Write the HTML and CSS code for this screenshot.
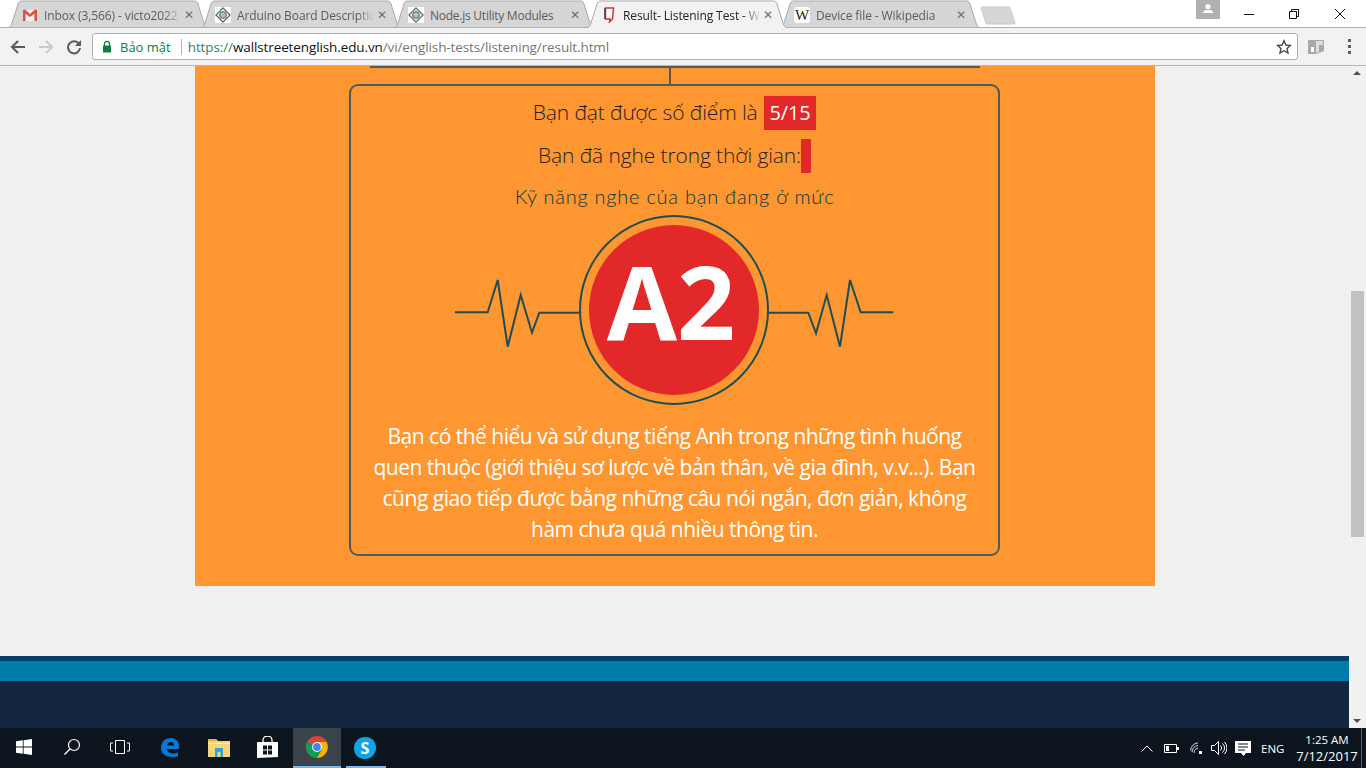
FILE: index.html
```html
<!DOCTYPE html>
<html lang="vi">
<head>
<meta charset="utf-8">
<title>Result- Listening Test</title>
<link rel="stylesheet" href="styles.css">
</head>
<body>
<header class="chrome">
  <div class="tabstrip">
    <div class="tab">
      <svg class="tab-shape" viewBox="0 0 206 28"><path d="M0 28 C5 28 6 26 7 23 L13 4 C14 1 15 1 18 1 L188 1 C191 1 192 1 193 4 L199 23 C200 26 201 28 206 28" /></svg>
      <svg class="fav" viewBox="0 0 16 16"><path d="M1 3h14v11H1z" fill="#f1f1f1"/><path d="M1 14V3l2-.5L8 7l5-4.500 2 .5v11h-2.500V6.500L8 10 3.500 6.500V14z" fill="#dd5044"/></svg>
      <span class="tab-title">Inbox (3,566) - victo2022</span>
      <span class="tab-x">✕</span>
    </div>
    <div class="tab">
      <svg class="tab-shape" viewBox="0 0 206 28"><path d="M0 28 C5 28 6 26 7 23 L13 4 C14 1 15 1 18 1 L188 1 C191 1 192 1 193 4 L199 23 C200 26 201 28 206 28" /></svg>
      <svg class="fav" viewBox="0 0 16 16"><path d="M0 0h16v16H0z" fill="#fff"/><path d="M8 1l7 7-7 7-7-7z" fill="none" stroke="#5f6f66" stroke-width="1.300"/><circle cx="8" cy="8" r="3.400" fill="#a9c4b2" stroke="#4f6a5c"/></svg>
      <span class="tab-title">Arduino Board Descriptic</span>
      <span class="tab-x">✕</span>
    </div>
    <div class="tab">
      <svg class="tab-shape" viewBox="0 0 206 28"><path d="M0 28 C5 28 6 26 7 23 L13 4 C14 1 15 1 18 1 L188 1 C191 1 192 1 193 4 L199 23 C200 26 201 28 206 28" /></svg>
      <svg class="fav" viewBox="0 0 16 16"><path d="M0 0h16v16H0z" fill="#fff"/><path d="M8 1l7 7-7 7-7-7z" fill="none" stroke="#5f6f66" stroke-width="1.300"/><circle cx="8" cy="8" r="3.400" fill="#a9c4b2" stroke="#4f6a5c"/></svg>
      <span class="tab-title tab-title-node">Node.js Utility Modules</span>
      <span class="tab-x">✕</span>
    </div>
    <div class="tab tab-active">
      <svg class="tab-shape" viewBox="0 0 206 28"><path d="M0 28 C5 28 6 26 7 23 L13 4 C14 1 15 1 18 1 L188 1 C191 1 192 1 193 4 L199 23 C200 26 201 28 206 28" /></svg>
      <svg class="fav" viewBox="0 0 16 16"><path d="M4.500 1h8l-1 11-3 3 .5-3h-4.500z" fill="#fff" stroke="#d6332f" stroke-width="1.500"/><path d="M4 1v11" stroke="#33495c" stroke-width="1.600"/></svg>
      <span class="tab-title tab-title-dark">Result- Listening Test - W</span>
      <span class="tab-x">✕</span>
    </div>
    <div class="tab">
      <svg class="tab-shape" viewBox="0 0 206 28"><path d="M0 28 C5 28 6 26 7 23 L13 4 C14 1 15 1 18 1 L188 1 C191 1 192 1 193 4 L199 23 C200 26 201 28 206 28" /></svg>
      <span class="fav fav-w">W</span>
      <span class="tab-title">Device file - Wikipedia</span>
      <span class="tab-x">✕</span>
    </div>
    <svg class="newtab" viewBox="0 0 36 20"><path d="M1 2 C1 1 2 1 3 1 L28 1 C29 1 30 1 30 2 L35 17 C35 18 34 18 33 18 L8 18 C7 18 6 18 6 17z" fill="#d6d6d6" stroke="#c8c8c8"/></svg>
    <div class="window-controls">
      <div class="profile"><svg viewBox="0 0 24 19" width="24" height="19"><circle cx="12" cy="6.500" r="2.600" fill="#fff"/><path d="M7 13c0-2.500 2-3 5-3s5 .5 5 3z" fill="#fff"/></svg></div>
      <svg class="wc-min" viewBox="0 0 12 12" width="12" height="12"><path d="M1 6.500h10" stroke="#111" fill="none"/></svg>
      <svg class="wc-max" viewBox="0 0 12 12" width="12" height="12"><path d="M1.500 3.500h7v7h-7zM3.500 3.500v-2h7v7h-2" stroke="#111" fill="none"/></svg>
      <svg class="wc-close" viewBox="0 0 12 12" width="12" height="12"><path d="M1 1l10 10M11 1L1 11" stroke="#111" fill="none"/></svg>
    </div>
  </div>
  <div class="toolbar">
    <svg class="nav" viewBox="0 0 16 16" width="16" height="16"><path d="M15 8H2M8 2L2 8l6 6" fill="none" stroke="#5a5a5a" stroke-width="2"/></svg>
    <svg class="nav" viewBox="0 0 16 16" width="16" height="16"><path d="M1 8h13M8 2l6 6-6 6" fill="none" stroke="#c9c9c9" stroke-width="2"/></svg>
    <svg class="nav nav-last" viewBox="0 0 16 16" width="16" height="16"><path d="M13 5a6 6 0 1 0 1 4" fill="none" stroke="#5a5a5a" stroke-width="2"/><path d="M15 1v6H9z" fill="#5a5a5a"/></svg>
    <div class="omnibox">
      <svg class="lock" viewBox="0 0 10 13" width="10" height="13"><path d="M2.500 6V3.800a2.500 2.500 0 0 1 5 0V6" fill="none" stroke="#0b8043" stroke-width="1.300"/><path d="M1 5.500h8v7H1z" fill="#0b8043"/></svg>
      <span class="secure">Bảo mật</span>
      <span class="omni-sep"></span>
      <span class="url"><span class="url-scheme">https://</span><span class="url-host">wallstreetenglish.edu.vn</span>/vi/english-tests/listening/result.html</span>
      <svg class="star" viewBox="0 0 16 16" width="16" height="16"><path d="M8 1.800l1.900 4.200 4.500.5-3.400 3 1 4.500L8 11.700 4 14l1-4.500-3.400-3 4.500-.5z" fill="none" stroke="#4a4a4a" stroke-width="1.400"/></svg>
    </div>
    <svg class="ext" viewBox="0 0 16 16" width="16" height="16"><path d="M0 1h16v11l-8 3H0z" fill="#a8a8a8"/><path d="M8 2h7v4H11v7l-3 1z" fill="#dcdcdc"/><path d="M3 8l3 0v5H3z" fill="#fff"/></svg>
    <div class="dots"><i></i><i></i><i></i></div>
  </div>
</header>

<main class="viewport">
  <div class="page">
    <section class="panel">
      <div class="tree-bar"></div>
      <div class="tree-stem"></div>
      <div class="result">
        <p class="score">Bạn đạt được số điểm là <span class="chip">5/15</span></p>
        <p class="score score-time">Bạn đã nghe trong thời gian:<span class="chip chip-empty"></span></p>
        <p class="level">Kỹ năng nghe của bạn đang ở mức</p>
        <div class="badge">
          <svg class="pulse" viewBox="0 0 439 70" width="439" height="70">
            <path d="M0 33.300H32.700L42.700 1 52.700 67.700 65.700 16 77 53.700 84.300 33.700H124.300M313.300 33.700H353.300L361 54.300 371.700 16 385 67.700 395 1 405.700 33.300H438.300" />
          </svg>
          <div class="ring"><div class="disc">A2</div></div>
        </div>
        <p class="desc">Bạn có thể hiểu và sử dụng tiếng Anh trong những tình huống<br>quen thuộc (giới thiệu sơ lược về bản thân, về gia đình, v.v...). Bạn<br>cũng giao tiếp được bằng những câu nói ngắn, đơn giản, không<br>hàm chưa quá nhiều thông tin.</p>
      </div>
    </section>
    <footer class="site-footer">
      <div class="foot-line"></div>
      <div class="foot-teal"></div>
      <div class="foot-navy"></div>
    </footer>
  </div>
  <aside class="scrollbar">
    <span class="arrow arrow-up"></span>
    <span class="thumb"></span>
    <span class="arrow arrow-down"></span>
  </aside>
</main>

<footer class="taskbar">
  <div class="task-item">
    <svg viewBox="0 0 16 16" width="16" height="16"><path d="M0 2.300L6.800 1.300V7.600H0zM7.600 1.200L16 0V7.600H7.600zM0 8.400H6.800V14.700L0 13.700zM7.600 8.400H16V16L7.600 14.800z" fill="#fff"/></svg>
  </div>
  <div class="task-item">
    <svg viewBox="0 0 18 18" width="18" height="18"><circle cx="11" cy="7" r="5.500" fill="none" stroke="#fff" stroke-width="1.200"/><path d="M7 11L1.500 16.500" stroke="#fff" stroke-width="1.500"/></svg>
  </div>
  <div class="task-item">
    <svg viewBox="0 0 20 14" width="20" height="14"><path d="M5.500 .5h9v13h-9z" fill="none" stroke="#fff"/><path d="M3 3H.5v8H3M17 3h2.500v8H17" fill="none" stroke="#fff"/></svg>
  </div>
  <div class="task-item task-gap">
    <svg viewBox="0 0 20 20" width="20" height="20"><path d="M1 11C1 5 5 1 11 1c5 0 8 3.500 8 9v2H7c.3 3 3 4.500 6 4.500 2 0 4-.5 5-1.500v4c-1.500.7-3.500 1-5.500 1C6 20 1 17 1 11zM7 8.500h7C14 6 12.500 5 10.800 5 9 5 7.500 6.200 7 8.500z" fill="#0a78d4"/></svg>
  </div>
  <div class="task-item task-files">
    <svg viewBox="0 0 22 19" width="22" height="19"><path d="M0 1h8l2 2h12v16H0z" fill="#f5d67a"/><path d="M0 1h8l1 2H0z" fill="#e0b04a"/><path d="M0 5h22v1H0z" fill="#fff1b8"/><path d="M7 10h8v9h-2.500v-5h-3v5H7z" fill="#2ba6e0"/></svg>
  </div>
  <div class="task-item">
    <svg viewBox="0 0 21 22" width="21" height="22"><path d="M0 6h21v15l-21 1z" fill="#fff"/><path d="M6 6V4a4.500 4 0 0 1 9 0v2" fill="none" stroke="#fff" stroke-width="1.300"/><path d="M6 9.500h4v4H6zM11 9.500h4v4h-4zM6 14.500h4v4H6zM11 14.500h4v4h-4z" fill="#0d1620"/></svg>
  </div>
  <div class="task-item task-chrome">
    <svg viewBox="0 0 22 22" width="22" height="22"><circle cx="11" cy="11" r="11" fill="#db4437"/><path d="M11 11L1.500 5.500A11 11 0 0 0 11 22l5.500-9.500z" fill="#0f9d58"/><path d="M11 6h9.500A11 11 0 0 1 11 22l5-8.500z" fill="#f4b400"/><circle cx="11" cy="11" r="5" fill="#fff"/><circle cx="11" cy="11" r="3.900" fill="#4285f4"/></svg>
  </div>
  <div class="task-item task-skype">
    <div class="skype"><span>S</span></div>
  </div>
  <div class="tray">
    <svg class="t-chev" viewBox="0 0 12 7" width="12" height="7"><path d="M.5 6.500l5.500-5.500 5.500 5.500" fill="none" stroke="#fff" stroke-width="1"/></svg>
    <svg class="t-batt" viewBox="0 0 15 9" width="15" height="9"><path d="M.5 .5h12v8H.5z" fill="none" stroke="#fff"/><path d="M2 2h3v5H2z" fill="#fff"/><path d="M13 3h2v3h-2z" fill="#fff"/></svg>
    <svg class="t-wifi" viewBox="0 0 12 12" width="12" height="12"><path d="M.5 8.500A9 9 0 0 1 8 .8M2 10a7 7 0 0 1 6-6.500M4 11a5 5 0 0 1 4-5" fill="none" stroke="#d6dadd"/><path d="M9 9h3v3H9z" fill="#fff"/></svg>
    <svg class="t-vol" viewBox="0 0 16 14" width="16" height="14"><path d="M.5 4.500h3l4-4v13l-4-4h-3z" fill="none" stroke="#fff"/><path d="M9.500 4.500a3.500 3.500 0 0 1 0 5M11.500 2.500a6 6 0 0 1 0 9M13.500 1a8.500 8.500 0 0 1 0 12" fill="none" stroke="#fff"/></svg>
    <svg class="t-note" viewBox="0 0 16 15" width="16" height="15"><path d="M0 0h16v12h-5l-2.500 3L6 12H0z" fill="#fff"/><path d="M3 3h10M3 6h10M3 9h7" stroke="#0d1620"/></svg>
    <span class="lang">ENG</span>
    <div class="clock"><span class="clock-time">1:25 AM</span><span class="clock-date">7/12/2017</span></div>
    <span class="show-desktop"></span>
  </div>
</footer>
</body>
</html>
```
FILE: styles.css
```css
* { box-sizing: border-box; }
html, body { margin: 0; height: 100%; }
body {
  width: 1366px;
  height: 768px;
  overflow: hidden;
  display: flex;
  flex-direction: column;
  font-family: "Open Sans", "Noto Sans", sans-serif;
  background: #f0f0f0;
}
p { margin: 0; }

/* browser chrome */
.chrome { height: 66px; flex: none; background: #fff; }
.tabstrip {
  height: 28px;
  display: flex;
  padding-left: 5px;
  position: relative;
}
.tabstrip::after {
  content: "";
  position: absolute;
  left: 0; right: 0; bottom: 0;
  height: 1px;
  background: #b1b1b1;
}
.tab {
  position: relative;
  width: 206px;
  height: 28px;
  margin-right: -13px;
  padding: 2px 17px 0;
  display: flex;
  align-items: center;
  flex: none;
  font-size: 12px;
  color: #5b5b5b;
}
.tab-shape {
  position: absolute;
  left: 0; top: 0;
  width: 206px; height: 28px;
  fill: #d6d6d6;
  stroke: #a9a9a9;
  stroke-width: 1;
}
.tab-active { z-index: 2; }
.tab-active .tab-shape { fill: #f2f2f2; }
.fav {
  position: relative;
  width: 16px;
  height: 16px;
  flex: none;
  margin-right: 6px;
}
.fav-w {
  background: #fff;
  border-radius: 3px;
  font: 15px/16px "Liberation Serif", serif;
  color: #222;
  text-align: center;
}
.tab-title {
  position: relative;
  width: 143px;
  overflow: hidden;
  white-space: nowrap;
  letter-spacing: -.1px;
  -webkit-mask-image: linear-gradient(to right, #000 120px, transparent 138px);
  mask-image: linear-gradient(to right, #000 120px, transparent 138px);
}
.tab-title-node {
  letter-spacing: -.25px;
  -webkit-mask-image: none;
  mask-image: none;
}
.tab-title-dark { color: #222; }
.tab-x {
  position: relative;
  margin-left: auto;
  font: bold 12px/1 "DejaVu Sans", sans-serif;
  color: #6e6e6e;
}
.newtab { width: 36px; height: 20px; margin: 6px 0 0 10px; flex: none; position: relative; }
.window-controls { margin-left: auto; display: flex; align-items: flex-start; height: 27px; }
.profile { width: 24px; height: 19px; background: #b0b0b0; margin-right: 23px; }
.wc-min { margin: 8px 33px 0 0; }
.wc-max { margin: 8px 34px 0 0; }
.wc-close { margin: 8px 20px 0 0; }

.toolbar {
  height: 38px;
  display: flex;
  align-items: center;
  background: #f2f2f2;
  border-bottom: 1px solid #b5b5b5;
  padding-left: 10px;
}
.nav { margin-right: 12px; flex: none; }
.nav-last { margin-right: 10px; }
.omnibox {
  width: 1206px;
  height: 27px;
  background: #fff;
  border: 1px solid #aeaeae;
  border-radius: 3px;
  display: flex;
  align-items: center;
  padding: 0 5px 0 9px;
  font-size: 13px;
  flex: none;
}
.lock { flex: none; margin-right: 8px; }
.secure { color: #0b8043; }
.omni-sep { width: 1px; height: 16px; background: #b5b5b5; margin: 0 6px 0 10px; }
.url { color: #757575; white-space: nowrap; font-size: 13.5px; letter-spacing: -.11px; }
.url-scheme { color: #3a7d6c; }
.url-host { color: #111; }
.star { margin-left: auto; flex: none; }
.ext { margin-left: 10px; flex: none; }
.dots { margin-left: 24px; display: flex; flex-direction: column; gap: 3px; }
.dots i { width: 3px; height: 3px; background: #5f5f5f; display: block; }

/* page */
.viewport { flex: 1; display: flex; min-height: 0; }
.page { flex: 1; display: flex; flex-direction: column; background: #f0f0f0; }
.panel {
  width: 960px;
  height: 520px;
  margin-left: 195px;
  background: #fe9632;
}
.tree-bar { width: 610px; height: 2px; margin-left: 175px; background: #5a5a52; }
.tree-stem { width: 2px; height: 16px; margin-left: 474px; background: #4f5a55; }
.result {
  width: 651px;
  height: 472px;
  margin-left: 154px;
  border: 2px solid #4e5a58;
  border-radius: 9px;
  padding-top: 10px;
  text-align: center;
}
.score {
  font-size: 21px;
  font-weight: 300;
  line-height: 32px;
  height: 34px;
  color: #1f1f1f;
  letter-spacing: -.12px;
}
.score-time { margin-top: 9px; }
.chip {
  display: inline-block;
  vertical-align: top;
  height: 34px;
  line-height: 34px;
  padding: 0 5.5px;
  margin-left: 1px;
  background: #e22828;
  color: #fff;
  font-size: 20px;
  font-weight: 400;
  letter-spacing: -.1px;
}
.chip-empty { width: 10px; padding: 0; margin-left: 0; }
.level {
  margin-top: 7px;
  font-family: "Lato", sans-serif;
  font-weight: 300;
  font-size: 20px;
  line-height: 32px;
  color: #083838;
  letter-spacing: .75px;
}
.badge {
  position: relative;
  height: 190px;
  margin-top: 3px;
  display: flex;
  justify-content: center;
}
.pulse {
  position: absolute;
  left: 104px;
  top: 64px;
  fill: none;
  stroke: #1f4e52;
  stroke-width: 2;
}
.ring {
  position: relative;
  width: 190px;
  height: 190px;
  border: 2px solid #1f4e52;
  border-radius: 50%;
  display: flex;
  align-items: center;
  justify-content: center;
  margin-left: -1px;
}
.disc {
  width: 170px;
  height: 170px;
  padding-right: 6px;
  border-radius: 50%;
  background: #e22828;
  color: #fff;
  font-weight: 700;
  font-size: 102px;
  line-height: 152px;
}
.desc {
  margin-top: 16px;
  font-size: 21px;
  line-height: 31px;
  color: #fff;
  letter-spacing: -.5px;
}
.site-footer { margin-top: 70px; flex: 1; display: flex; flex-direction: column; }
.foot-line { height: 5px; background: #063f66; }
.foot-teal { height: 20px; background: #007ca8; }
.foot-navy { flex: 1; background: #12263d; }

.scrollbar {
  width: 17px;
  flex: none;
  background: #f1f1f1;
  position: relative;
}
.thumb {
  position: absolute;
  left: 2px; top: 225px;
  width: 13px; height: 246px;
  background: #c1c1c1;
}
.arrow { position: absolute; left: 4px; width: 0; height: 0; border-left: 4px solid transparent; border-right: 4px solid transparent; }
.arrow-up { top: 5px; border-bottom: 4px solid #505050; }
.arrow-down { bottom: 5px; border-top: 4px solid #505050; }

/* taskbar */
.taskbar {
  height: 40px;
  flex: none;
  display: flex;
  align-items: stretch;
  background: #0c151e;
}
.task-item {
  width: 48px;
  display: flex;
  align-items: center;
  justify-content: center;
  flex: none;
  border-bottom: 2px solid transparent;
}
.task-gap { margin-left: 2px; }
.task-files { margin-left: 1px; }
.task-chrome { background: #3b444b; border-bottom-color: #76b9ed; margin-left: 2px; }
.task-skype { position: relative; border-bottom: 0; }
.task-skype::after {
  content: "";
  position: absolute;
  left: 5px; right: 3px; bottom: 0;
  height: 2px;
  background: #76b9ed;
}
.skype {
  width: 22px;
  height: 22px;
  border-radius: 50% 45% 50% 45%;
  background: #0ea5e6;
  color: #fff;
  font-weight: 700;
  font-size: 16px;
  line-height: 22px;
  text-align: center;
}
.tray {
  margin-left: auto;
  display: flex;
  align-items: center;
  color: #fff;
}
.t-chev, .t-batt { margin-right: 11px; }
.t-wifi { margin-right: 9px; }
.t-vol { margin-right: 8px; }
.t-note { margin-right: 10px; }
.lang { font-size: 11.5px; width: 37px; }
.clock {
  display: flex;
  flex-direction: column;
  align-items: center;
  line-height: 17px;
  width: 58px;
}
.clock-time { font-size: 11.500px; }
.clock-date { font-size: 13px; }
.show-desktop { width: 1px; height: 40px; background: #59626a; margin-left: 5px; margin-right: 4px; }
```
